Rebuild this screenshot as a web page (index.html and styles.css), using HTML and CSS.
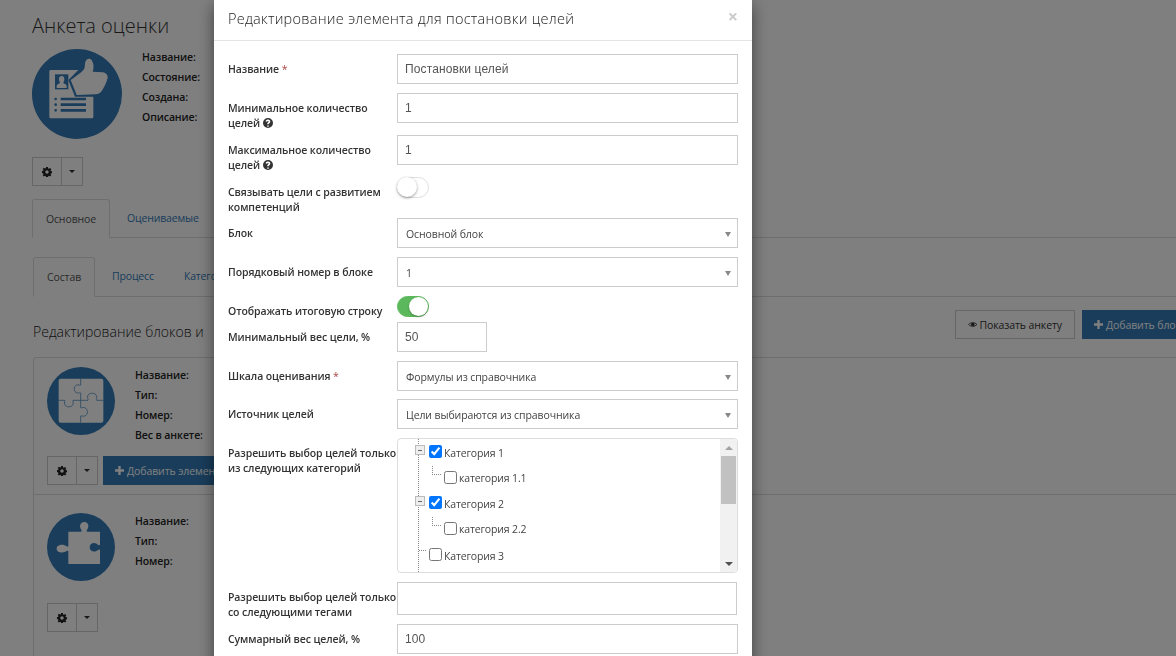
FILE: index.html
```html
<!DOCTYPE html>
<html lang="ru">
<head>
<meta charset="utf-8">
<title>Анкета оценки</title>
<link rel="stylesheet" href="styles.css">
</head>
<body>
<svg class="defs" width="0" height="0">
  <symbol id="gear" viewBox="0 0 16 16"><path fill-rule="evenodd" d="M6.6 0h2.8l.4 2.2 1.3.6L12.9 1.500l2 2-1.300 1.800.6 1.300 2.200.4v2.800l-2.200.4-.6 1.300 1.300 1.800-2 2-1.800-1.300-1.300.6-.4 2.200H6.600l-.4-2.200-1.300-.6-1.800 1.300-2-2 1.300-1.800-.6-1.300L-.4 9.400V6.600l2.200-.4.6-1.300L1.100 3.100l2-2 1.800 1.300 1.300-.6zM8 5.200a2.800 2.800 0 1 0 0 5.600 2.800 2.800 0 0 0 0-5.600z"/></symbol>
  <symbol id="plus" viewBox="0 0 10 10"><path d="M3.700 0h2.600v3.700H10v2.600H6.300V10H3.700V6.300H0V3.700h3.700z"/></symbol>
  <symbol id="help" viewBox="0 0 16 16"><path fill-rule="evenodd" d="M8 0a8 8 0 1 1 0 16A8 8 0 0 1 8 0zM6.800 12v2h2.400v-2zM8 2.500c-2 0-3.400 1-3.800 2.900l2.200.5c.2-.9.7-1.300 1.500-1.300.7 0 1.200.4 1.200 1 0 .5-.3.8-1 1.300-1 .7-1.300 1.300-1.300 2.400V10h2.400v-.4c0-.5.2-.8.9-1.300 1-.7 1.600-1.400 1.600-2.700 0-1.800-1.400-3.100-3.700-3.100z"/></symbol>
  <symbol id="puzzle-4" viewBox="0 0 204 204"><circle cx="102" cy="102" r="102" fill="#337ab7"/><rect x="35" y="35" width="134" height="132" rx="6" fill="#fff"/><path d="M101 35v19c-3 2-6-2-12 0-10 3-10 22 2 24 4 1 7-2 10 0v22H78c-2 3 2 6 0 12-3 10-22 10-25 0-2-6 2-9 0-12H35M101 100h22c2-3-3-7-1-13 3-11 24-11 27 0 2 6-3 10 0 13h20M101 100v22c3 2 6-2 12 0 11 3 11 22 0 25-6 2-9-2-12 0v20" fill="none" stroke="#337ab7" stroke-width="2"/></symbol>
  <symbol id="puzzle-1" viewBox="0 0 204 204"><circle cx="102" cy="102" r="102" fill="#337ab7"/><path d="M64 56h37c3 0 4-3 2-6-6-6-6-23 9-23 14 0 15 17 8 23-2 3-1 6 2 6h37v38c0 3-3 3-5 2-5-4-11-7-17-5-12 2-12 22 0 24 7 2 13-2 17-5 2-1 5-1 5 2v41H64v-37c0-3-2-4-5-2-7 6-30 7-30-7 0-14 23-14 30-7 3 2 5 1 5-2z" fill="#fff"/></symbol>
</svg>

<div class="page">
  <h1 class="page-title">Анкета оценки</h1>
  <div class="profile">
    <svg class="avatar" viewBox="0 0 270 270" aria-hidden="true">
      <circle cx="135" cy="135" r="135" fill="#337ab7"/>
      <path d="M56 63h83l-30 30 20 50h55v61a4 4 0 0 1-4 4H56a4 4 0 0 1-4-4V67a4 4 0 0 1 4-4z" fill="#fff"/>
      <path d="M69 76h40v45H69z" fill="#337ab7"/>
      <path d="M89 81c6 0 9 5 8 11-1 5-3 8-3 9 1 3 10 4 10 10v6H74v-6c0-6 9-7 10-10 0-1-2-4-3-9-1-6 2-11 8-11z" fill="#fff"/>
      <path d="M67 150a4 4 0 1 0 8 0 4 4 0 1 0-8 0zM67 167a4 4 0 1 0 8 0 4 4 0 1 0-8 0zM67 184a4 4 0 1 0 8 0 4 4 0 1 0-8 0zM86 146h76v8H86zM86 163h76v8H86zM86 180h76v8H86z" fill="#337ab7"/>
      <path d="M116 93c14-10 30-20 40-32 3-4 2-14 4-22 2-9 14-14 20-4 6 11 6 22 2 33l30 2c9 1 16 8 15 16-2 10-8 23-13 32-4 10-12 17-22 18l-58 2z" fill="#fff"/>
    </svg>
    <dl class="facts">
      <dt>Название:</dt>
      <dt>Состояние:</dt>
      <dt>Создана:</dt>
      <dt>Описание:</dt>
    </dl>
  </div>
  <div class="btn-split btn-split-top">
    <span class="btn-gear"><svg class="i-gear"><use href="#gear"/></svg></span><span class="btn-caret"></span>
  </div>
  <nav class="tabs">
    <span class="tab tab-active">Основное</span>
    <span class="tab tab-link">Оцениваемые</span>
  </nav>
  <nav class="tabs tabs-sub">
    <span class="tab tab-active">Состав</span>
    <span class="tab tab-link">Процесс</span>
    <span class="tab tab-link">Категории</span>
  </nav>
  <div class="section-head">
    <h2 class="section-title">Редактирование блоков и</h2>
    <div class="section-actions">
      <span class="btn btn-light"><svg class="i-eye" viewBox="0 0 16 10"><path d="M1 5C4 1 12 1 15 5 12 9 4 9 1 5z" fill="none" stroke="#333" stroke-width="1.500"/><circle cx="8" cy="5" r="3"/></svg>Показать анкету</span>
      <span class="btn btn-primary"><svg class="i-plus"><use href="#plus"/></svg>Добавить блок</span>
    </div>
  </div>
  <section class="blocks">
    <article class="block block-first">
      <div class="block-info">
        <svg class="block-icon"><use href="#puzzle-4"/></svg>
        <dl class="facts facts-block">
          <dt>Название:</dt>
          <dt>Тип:</dt>
          <dt>Номер:</dt>
          <dt>Вес в анкете:</dt>
        </dl>
      </div>
      <div class="block-actions">
        <div class="btn-split">
          <span class="btn-gear"><svg class="i-gear"><use href="#gear"/></svg></span><span class="btn-caret"></span>
        </div>
        <span class="btn btn-primary"><svg class="i-plus"><use href="#plus"/></svg>Добавить элемент</span>
      </div>
    </article>
    <article class="block block-second">
      <div class="block-info">
        <svg class="block-icon"><use href="#puzzle-1"/></svg>
        <dl class="facts facts-block">
          <dt>Название:</dt>
          <dt>Тип:</dt>
          <dt>Номер:</dt>
        </dl>
      </div>
      <div class="block-actions">
        <div class="btn-split">
          <span class="btn-gear"><svg class="i-gear"><use href="#gear"/></svg></span><span class="btn-caret"></span>
        </div>
      </div>
    </article>
    <article class="block">
      <svg class="block-icon"><use href="#puzzle-1"/></svg>
    </article>
  </section>
</div>

<div class="overlay">
  <div class="modal">
    <header class="modal-head">
      <h3 class="modal-title">Редактирование элемента для постановки целей</h3>
      <span class="modal-close">×</span>
    </header>
    <form class="modal-body">
      <div class="row">
        <label class="lbl">Название <b class="req">*</b></label>
        <div class="ctl"><div class="input">Постановки целей</div></div>
      </div>
      <div class="row">
        <label class="lbl">Минимальное количество<br>целей <svg class="i-help"><use href="#help"/></svg></label>
        <div class="ctl"><div class="input">1</div></div>
      </div>
      <div class="row">
        <label class="lbl">Максимальное количество<br>целей <svg class="i-help"><use href="#help"/></svg></label>
        <div class="ctl"><div class="input">1</div></div>
      </div>
      <div class="row row-compact">
        <label class="lbl">Связывать цели с развитием<br>компетенций</label>
        <div class="ctl"><span class="toggle"></span></div>
      </div>
      <div class="row">
        <label class="lbl">Блок</label>
        <div class="ctl"><div class="select">Основной блок</div></div>
      </div>
      <div class="row">
        <label class="lbl">Порядковый номер в блоке</label>
        <div class="ctl"><div class="select">1</div></div>
      </div>
      <div class="row row-toggle">
        <label class="lbl">Отображать итоговую строку</label>
        <div class="ctl"><span class="toggle toggle-on"></span></div>
      </div>
      <div class="row">
        <label class="lbl">Минимальный вес цели, %</label>
        <div class="ctl"><div class="input input-short">50</div></div>
      </div>
      <div class="row row-tight">
        <label class="lbl">Шкала оценивания <b class="req">*</b></label>
        <div class="ctl"><div class="select">Формулы из справочника</div></div>
      </div>
      <div class="row">
        <label class="lbl">Источник целей</label>
        <div class="ctl"><div class="select">Цели выбираются из справочника</div></div>
      </div>
      <div class="row">
        <label class="lbl">Разрешить выбор целей только<br>из следующих категорий</label>
        <div class="ctl">
          <div class="tree">
            <div class="tree-list">
              <div class="node node-root node-open"><input type="checkbox" checked><span>Категория 1</span></div>
              <div class="node node-child"><input type="checkbox"><span>категория 1.1</span></div>
              <div class="node node-root node-open"><input type="checkbox" checked><span>Категория 2</span></div>
              <div class="node node-child"><input type="checkbox"><span>категория 2.2</span></div>
              <div class="node node-root node-leaf"><input type="checkbox"><span>Категория 3</span></div>
            </div>
            <div class="sbar"><span class="sbar-up"></span><span class="sbar-thumb"></span><span class="sbar-down"></span></div>
          </div>
        </div>
      </div>
      <div class="row">
        <label class="lbl">Разрешить выбор целей только<br>со следующими тегами</label>
        <div class="ctl"><div class="input input-tags"></div></div>
      </div>
      <div class="row">
        <label class="lbl">Суммарный вес целей, %</label>
        <div class="ctl"><div class="input">100</div></div>
      </div>
    </form>
  </div>
</div>
</body>
</html>
```
FILE: styles.css
```css
* { box-sizing: border-box; }
html, body { height: 100%; }
body {
  margin: 0;
  overflow: hidden;
  background: #fff;
  color: #333;
  font-family: "Open Sans", "Noto Sans", sans-serif;
  font-size: 10.500px;
  letter-spacing: -.1px;
}
.defs { position: absolute; }

/* Background page */
.page { padding: 13px 0 0 32px; height: 656px; overflow: hidden; }
.page-title { margin: 0; font-size: 20px; font-weight: 300; line-height: 25px; color: #333; letter-spacing: 0; }
.profile { display: flex; margin-top: 11px; height: 90px; }
.avatar { width: 90px; height: 90px; flex: none; }
.facts { margin: -2px 0 0 20px; }
.facts dt { font-weight: 600; line-height: 20px; color: #222; }
.btn-split { display: inline-flex; height: 29px; flex: none; }
.btn-split-top { display: flex; margin-top: 18px; }
.btn-gear, .btn-caret {
  display: flex; align-items: center; justify-content: center;
  height: 29px; border: 1px solid #ccc;
}
.btn-gear { width: 30px; }
.btn-caret { width: 22px; margin-left: -1px; }
.btn-caret::after {
  content: ""; border: 3px solid transparent; border-top-color: #333; border-bottom: 0;
}
.i-gear { width: 10px; height: 10px; fill: #222; }
.tabs { display: flex; margin-top: 13px; height: 39px; border-bottom: 1px solid #ddd; }
.tab { padding-top: 12px; line-height: 15px; color: #555; flex: none; }
.tab-active {
  width: 78px; height: 39px; text-align: center; margin-right: 17px;
  background: #fff; border: 1px solid #ddd; border-bottom-color: #fff; border-radius: 3px 3px 0 0;
}
.tab-link { color: #337ab7; padding-right: 30px; letter-spacing: -.15px; }
.tabs-sub { margin-top: 19px; margin-left: 1px; height: 40px; }
.tabs-sub .tab-active { width: 62px; height: 40px; }
.section-head { display: flex; justify-content: space-between; margin-top: 13px; padding-left: 1px; height: 29px; }
.section-title { margin: 0; padding-top: 11px; font-size: 14px; font-weight: 300; line-height: 22px; white-space: nowrap; color: #222; letter-spacing: 0; }
.section-actions { display: flex; gap: 7px; flex: none; width: 221px; }
.btn { display: inline-flex; align-items: center; height: 29px; white-space: nowrap; flex: none; }
.btn-light { border: 1px solid #ccc; padding: 0 12px; width: 120px; color: #333; }
.btn-primary { background: #337ab7; color: #fff; padding: 0 12px; }
.i-eye { width: 13px; height: 9px; fill: #333; margin-right: 2px; }
.i-plus { width: 9px; height: 9px; fill: #fff; margin-right: 3px; }
.blocks { margin: 18px 0 0 1px; border: 1px solid #ddd; border-radius: 3px; width: 1200px; }
.block { padding: 9px 13px 0; }
.block-first { height: 137px; border-bottom: 1px solid #ddd; }
.block-second { height: 160px; padding-top: 18px; }
.block-info { display: flex; height: 68px; }
.block-icon { width: 68px; height: 68px; flex: none; display: block; }
.facts-block { margin-left: 20px; }
.block-actions { display: flex; gap: 5px; margin-top: 21px; }
.block-second .block-actions { margin-top: 22px; }

/* Overlay + dialog */
.overlay { position: fixed; inset: 0; background: rgba(0, 0, 0, .5); overflow: hidden; }
.modal {
  width: 538px; margin-left: 214px; height: 760px; background: #fff;
  box-shadow: 0 5px 15px rgba(0, 0, 0, .5);
}
.modal-head { display: flex; justify-content: space-between; height: 41px; border-bottom: 1px solid #e5e5e5; padding: 0 14px; }
.modal-title { margin: 0; font-size: 14.500px; font-weight: 300; line-height: 38px; color: #222; white-space: nowrap; letter-spacing: .25px; }
.modal-close { font-size: 18px; font-weight: 700; line-height: 32px; color: #ccc; letter-spacing: 0; }
.modal-body { padding: 13px 14px 0; }
.row { display: flex; }
.row-compact { height: 41px; }
.row-toggle { height: 26px; }
.row-tight { height: 38px; }
.lbl {
  width: 169px; flex: none; padding-top: 8px; margin-bottom: 4px;
  font-weight: 600; line-height: 15px; color: #333; white-space: nowrap;
}
.req { color: #a94442; font-weight: 400; }
.i-help { width: 10px; height: 10px; fill: #333; vertical-align: -1px; }
.ctl { flex: 1; min-width: 0; }
.input, .select {
  height: 30px; margin-bottom: 9px; border: 1px solid #ccc;
  padding: 0 7px; line-height: 28px; color: #555;
  font-family: "Liberation Sans", Arial, sans-serif; font-size: 12px; letter-spacing: .12px;
}
.input-short { width: 90px; }
.input-tags { height: 33px; width: 340px; }
.select {
  position: relative; padding-left: 8px; color: #444; line-height: 30px;
  font-family: "Open Sans", sans-serif; font-size: 10.500px; letter-spacing: -.1px;
}
.select::after {
  content: ""; position: absolute; right: 6px; top: 13px;
  border: 3.500px solid transparent; border-top: 5px solid #888; border-bottom: 0;
}
.toggle {
  display: block; position: relative; width: 32px; height: 21px;
  border: 1px solid #dfdfdf; border-radius: 11px; background: #fff;
}
.toggle::after {
  content: ""; position: absolute; left: -1px; top: -1px; width: 20px; height: 20px;
  border-radius: 50%; background: #fff; box-shadow: 0 1px 3px rgba(0, 0, 0, .4);
}
.toggle-on { background: #5cb85c; border-color: #5cb85c; }
.toggle-on::after { left: 11px; top: 0; width: 19px; height: 19px; box-shadow: 0 1px 2px rgba(0, 0, 0, .3); }

/* Tree */
.tree {
  display: flex; height: 135px; margin-bottom: 9px; overflow: hidden;
  border: 1px solid #ddd; border-radius: 4px;
}
.tree-list { flex: 1; position: relative; padding-top: 1px; }
.tree-list::before {
  content: ""; position: absolute; left: 20px; top: 0; bottom: 0;
  border-left: 1px dotted #888;
}
.node { display: flex; align-items: center; position: relative; height: 25.500px; color: #444; line-height: 15px; letter-spacing: -.15px; }
.node input { margin: 0 2px 2px 0; width: 13px; height: 13px; flex: none; }
.node-root { padding-left: 31px; }
.node-root input { margin-bottom: 3px; }
.node-root span { padding-top: 2px; }
.node-leaf { margin-top: 1px; }
.node-child { padding-left: 46px; }
.node-child input { margin-bottom: 2px; }
.node-open::before {
  content: ""; position: absolute; left: 17px; top: 5px; width: 8px; height: 8px; z-index: 1;
  background: linear-gradient(#666, #666) center / 4px 1px no-repeat #eee; border: 1px solid #bbb;
}
.node-child::before {
  content: ""; position: absolute; left: 34px; top: 0; width: 8px; height: 8px;
  border-left: 1px dotted #888; border-bottom: 1px dotted #888;
}
.node-leaf::before {
  content: ""; position: absolute; left: 21px; top: 7px; width: 7px;
  border-top: 1px dotted #888;
}
.sbar { width: 17px; flex: none; display: flex; flex-direction: column; background: #f1f1f1; }
.sbar-up, .sbar-down { height: 17px; flex: none; display: flex; align-items: center; justify-content: center; }
.sbar-up::after { content: ""; border: 4px solid transparent; border-bottom: 4px solid #a3a3a3; border-top: 0; }
.sbar-down { margin-top: auto; }
.sbar-down::after { content: ""; border: 4px solid transparent; border-top: 4px solid #505050; border-bottom: 0; }
.sbar-thumb { height: 48px; background: #c1c1c1; margin: 0 1px; }
```
